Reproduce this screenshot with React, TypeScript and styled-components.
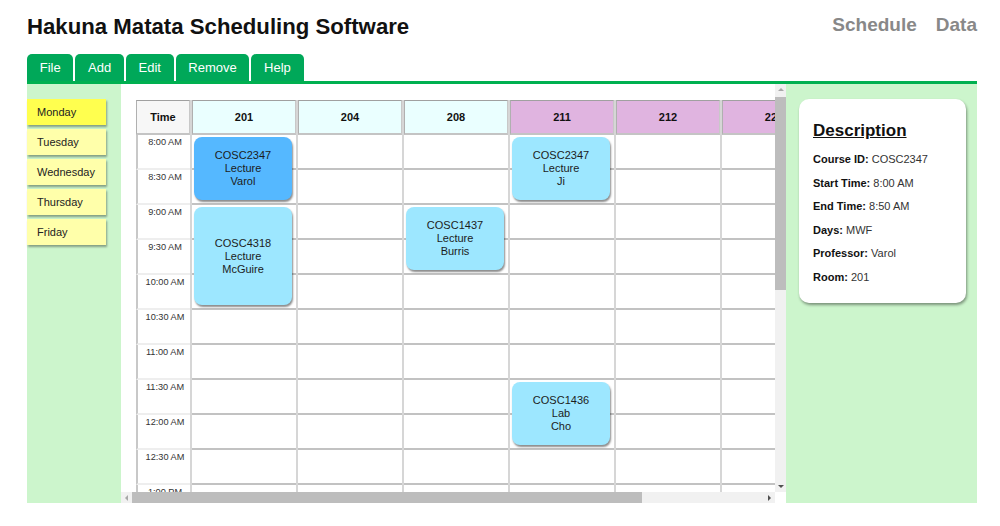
import React from "react";
import styled, { createGlobalStyle } from "styled-components";

const Global = createGlobalStyle`
  html, body { margin: 0; padding: 0; background: #ffffff; }
  body { font-family: "Liberation Sans", Arial, sans-serif; color: #111; }
  * { box-sizing: border-box; }
`;

const Page = styled.div`
  width: 950px;
  margin-left: 27px;
  padding-top: 14px;
`;

const Header = styled.header`
  display: flex;
  justify-content: space-between;
  align-items: flex-start;
  height: 40px;
`;

const Title = styled.h1`
  margin: 0;
  font-size: 22.2px;
  line-height: 26px;
  font-weight: bold;
  color: #111;
`;

const Nav = styled.nav`
  display: flex;
  gap: 19px;
`;

const NavLink = styled.a`
  font-size: 19px;
  line-height: 22px;
  font-weight: bold;
  color: #888888;
  text-decoration: none;
`;

const Tabs = styled.div`
  display: flex;
  gap: 2px;
  height: 27px;
  border-bottom: 3px solid #00b050;
  box-sizing: content-box;
`;

const Tab = styled.button`
  height: 27px;
  padding: 0 12.7px;
  border: none;
  border-radius: 5px 5px 0 0;
  background: #00a859;
  color: #ffffff;
  font-family: "Liberation Sans", Arial, sans-serif;
  font-size: 13px;
  line-height: 27px;
  cursor: pointer;
`;

const Main = styled.main`
  display: flex;
  height: 419px;
  background: #ccf5cc;
`;

const DayList = styled.div`
  width: 94px;
  flex: none;
  padding-top: 15px;
  display: flex;
  flex-direction: column;
  gap: 4px;
`;

const DayButton = styled.div<{ $active?: boolean }>`
  width: 79px;
  height: 26px;
  padding-left: 10px;
  display: flex;
  align-items: center;
  font-size: 11px;
  color: #222;
  background: ${(p) => (p.$active ? "#ffff4f" : "#ffffaa")};
  box-shadow: 1px 2px 2px rgba(0, 0, 0, 0.35);
`;

/* scroll frame with its own scrollbars */
const ScrollFrame = styled.div`
  flex: none;
  display: grid;
  grid-template-columns: 654px 11px;
  grid-template-rows: 408px 11px;
  background: #ffffff;
`;

const Viewport = styled.div`
  overflow: hidden;
  padding: 16px 0 0 15px;
`;

const VBar = styled.div`
  display: flex;
  flex-direction: column;
  background: #f1f1f1;
`;

const HBar = styled.div`
  display: flex;
  flex-direction: row;
  background: #f1f1f1;
`;

const Corner = styled.div`
  background: #ffffff;
`;

const ArrowButton = styled.div`
  flex: none;
  width: 11px;
  height: 11px;
  display: flex;
  align-items: center;
  justify-content: center;
`;

const Arrow = styled.span<{ $dir: "up" | "down" | "left" | "right"; $dim?: boolean }>`
  width: 0;
  height: 0;
  border: 3px solid transparent;
  ${(p) => {
    const c = p.$dim ? "#a8a8a8" : "#505050";
    switch (p.$dir) {
      case "up":
        return `border-top-width: 0; border-bottom: 3px solid ${c};`;
      case "down":
        return `border-bottom-width: 0; border-top: 3px solid ${c};`;
      case "left":
        return `border-left-width: 0; border-right: 3px solid ${c};`;
      default:
        return `border-right-width: 0; border-left: 3px solid ${c};`;
    }
  }}
`;

const Track = styled.div`
  flex: 1;
  display: flex;
`;

const VThumb = styled.div`
  width: 11px;
  height: 193px;
  margin-top: 2px;
  background: #bdbdbd;
`;

const HThumb = styled.div`
  height: 11px;
  width: 510px;
  background: #bdbdbd;
`;

const Grid = styled.div`
  display: grid;
  grid-template-columns: 54px repeat(7, 104px);
  grid-template-rows: repeat(23, 35px);
  column-gap: 2px;
  width: max-content;
  background: #d6d6d6;
`;

const HeadCell = styled.div<{ $col: number; $tone: "time" | "cyan" | "violet" }>`
  grid-row: 1;
  grid-column: ${(p) => p.$col};
  display: flex;
  align-items: center;
  justify-content: center;
  font-size: 11px;
  font-weight: bold;
  color: #111;
  border-top: 1px solid #a0a0a0;
  border-left: 1px solid #b0b0b0;
  border-right: 1px solid #c8c8c8;
  border-bottom: 2px solid #c4c4c4;
  background: ${(p) =>
    p.$tone === "time" ? "#f7f7f7" : p.$tone === "cyan" ? "#eaffff" : "#e0b4e0"};
`;

const TimeCell = styled.div<{ $row: number }>`
  grid-row: ${(p) => p.$row};
  grid-column: 1;
  background: #ffffff;
  border-left: 2px solid #c8c8c8;
  border-bottom: 2px solid #eeeeee;
  text-align: center;
  font-size: 9.2px;
  line-height: 11px;
  padding-top: 2px;
  padding-left: 2px;
  color: #333;
`;

const SlotCell = styled.div<{ $row: number; $col: number }>`
  grid-row: ${(p) => p.$row};
  grid-column: ${(p) => p.$col};
  background: #ffffff;
  border-bottom: 2px solid #c2c2c2;
`;

const CourseBlock = styled.div<{ $row: number; $col: number; $span: number; $selected?: boolean }>`
  grid-row: ${(p) => p.$row} / span ${(p) => p.$span};
  grid-column: ${(p) => p.$col};
  z-index: 1;
  margin: 2px 4px 5px 2px;
  border-radius: 8px;
  background: ${(p) => (p.$selected ? "#55b8ff" : "#9de7ff")};
  box-shadow: 1px 2px 2px rgba(0, 0, 0, 0.45);
  display: flex;
  flex-direction: column;
  align-items: center;
  justify-content: center;
  font-size: 11px;
  line-height: 13px;
  color: #1c1c1c;
  cursor: pointer;
`;

const SidePanel = styled.aside`
  flex: 1;
  padding: 15px 11px 0 13px;
`;

const Card = styled.section`
  width: 167px;
  background: #ffffff;
  border-radius: 10px;
  box-shadow: 1px 2px 3px rgba(0, 0, 0, 0.4);
  padding: 22px 10px 13px 14px;
`;

const CardTitle = styled.h2`
  margin: 0 0 7px 0;
  font-size: 17px;
  line-height: 20px;
  font-weight: bold;
  text-decoration: underline;
  color: #111;
`;

const InfoRow = styled.div`
  font-size: 11px;
  line-height: 23.6px;
  color: #333;
  white-space: nowrap;
`;

const InfoLabel = styled.b`
  color: #111;
`;

type Tone = "cyan" | "violet";
const rooms: { name: string; tone: Tone }[] = [
  { name: "201", tone: "cyan" },
  { name: "204", tone: "cyan" },
  { name: "208", tone: "cyan" },
  { name: "211", tone: "violet" },
  { name: "212", tone: "violet" },
  { name: "220", tone: "violet" },
  { name: "221", tone: "violet" },
];

const times = Array.from({ length: 22 }, (_, i) => {
  const mins = 8 * 60 + i * 30;
  const h24 = Math.floor(mins / 60);
  const m = mins % 60;
  const suffix = h24 < 13 ? "AM" : "PM";
  const h12 = h24 > 12 ? h24 - 12 : h24;
  return `${h12}:${m === 0 ? "00" : "30"} ${suffix}`;
});

const courses = [
  { id: "COSC2347", kind: "Lecture", prof: "Varol", room: 0, start: 0, span: 2, selected: true },
  { id: "COSC4318", kind: "Lecture", prof: "McGuire", room: 0, start: 2, span: 3 },
  { id: "COSC1437", kind: "Lecture", prof: "Burris", room: 2, start: 2, span: 2 },
  { id: "COSC2347", kind: "Lecture", prof: "Ji", room: 3, start: 0, span: 2 },
  { id: "COSC1436", kind: "Lab", prof: "Cho", room: 3, start: 7, span: 2 },
];

const days = ["Monday", "Tuesday", "Wednesday", "Thursday", "Friday"];
const menu = ["File", "Add", "Edit", "Remove", "Help"];

const details: [string, string][] = [
  ["Course ID:", "COSC2347"],
  ["Start Time:", "8:00 AM"],
  ["End Time:", "8:50 AM"],
  ["Days:", "MWF"],
  ["Professor:", "Varol"],
  ["Room:", "201"],
];

export default function App() {
  return (
    <>
      <Global />
      <Page>
        <Header>
          <Title>Hakuna Matata Scheduling Software</Title>
          <Nav>
            <NavLink>Schedule</NavLink>
            <NavLink>Data</NavLink>
          </Nav>
        </Header>
        <Tabs>
          {menu.map((m) => (
            <Tab key={m}>{m}</Tab>
          ))}
        </Tabs>
        <Main>
          <DayList>
            {days.map((d, i) => (
              <DayButton key={d} $active={i === 0}>
                {d}
              </DayButton>
            ))}
          </DayList>
          <ScrollFrame>
            <Viewport>
              <Grid>
                <HeadCell $col={1} $tone="time">Time</HeadCell>
                {rooms.map((r, j) => (
                  <HeadCell key={r.name} $col={j + 2} $tone={r.tone}>
                    {r.name}
                  </HeadCell>
                ))}
                {times.map((t, i) => (
                  <React.Fragment key={t + i}>
                    <TimeCell $row={i + 2}>{t}</TimeCell>
                    {rooms.map((r, j) => (
                      <SlotCell key={r.name} $row={i + 2} $col={j + 2} />
                    ))}
                  </React.Fragment>
                ))}
                {courses.map((c, k) => (
                  <CourseBlock
                    key={k}
                    $row={c.start + 2}
                    $col={c.room + 2}
                    $span={c.span}
                    $selected={c.selected}
                  >
                    <span>{c.id}</span>
                    <span>{c.kind}</span>
                    <span>{c.prof}</span>
                  </CourseBlock>
                ))}
              </Grid>
            </Viewport>
            <VBar>
              <ArrowButton>
                <Arrow $dir="up" $dim />
              </ArrowButton>
              <Track>
                <VThumb />
              </Track>
              <ArrowButton>
                <Arrow $dir="down" />
              </ArrowButton>
            </VBar>
            <HBar>
              <ArrowButton>
                <Arrow $dir="left" $dim />
              </ArrowButton>
              <Track>
                <HThumb />
              </Track>
              <ArrowButton>
                <Arrow $dir="right" />
              </ArrowButton>
            </HBar>
            <Corner />
          </ScrollFrame>
          <SidePanel>
            <Card>
              <CardTitle>Description</CardTitle>
              {details.map(([l, v]) => (
                <InfoRow key={l}>
                  <InfoLabel>{l}</InfoLabel> {v}
                </InfoRow>
              ))}
            </Card>
          </SidePanel>
        </Main>
      </Page>
    </>
  );
}
